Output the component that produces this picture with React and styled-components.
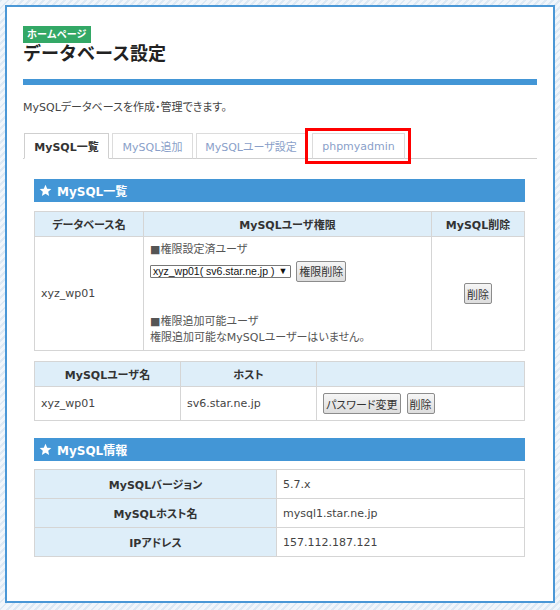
import React from 'react'
import styled, { createGlobalStyle } from 'styled-components'

const GlobalStyle = createGlobalStyle`
	html, body {
		margin: 0;
		padding: 0;
	}
	body {
		font-family: "DejaVu Sans", "Noto Sans CJK JP", sans-serif;
		color: #333;
		background: repeating-linear-gradient(135deg, #dde9f4 0 2px, #f1f6fb 2px 5px);
	}
`

const Page = styled.div`
	padding: 5px;
	width: 560px;
	height: 610px;
	box-sizing: border-box;
`

const Panel = styled.div`
	width: 550px;
	height: 598px;
	box-sizing: border-box;
	background: #fff;
	border: 2px solid #4a97d6;
	padding: 16px 16px 0 16px;
`

const Badge = styled.span`
	display: inline-block;
	background: #33a866;
	color: #fff;
	font-size: 10px;
	font-weight: bold;
	line-height: 17px;
	padding: 0 4px;
`

const Title = styled.h1`
	margin: 0;
	font-size: 18px;
	line-height: 22px;
	font-weight: bold;
	color: #222;
`

const Rule = styled.div`
	height: 6px;
	background: #4396d6;
	margin-top: 14px;
`

const Lead = styled.p`
	margin: 15px 0 0;
	font-size: 11px;
	line-height: 16px;
	color: #444;
	font-feature-settings: "palt";
`

const Tabs = styled.div`
	display: flex;
	gap: 3px;
	margin-top: 17px;
	padding-left: 1px;
	border-bottom: 1px solid #cfcfcf;
	height: 25px;
	font-feature-settings: "palt";
`

const Tab = styled.div`
	position: relative;
	box-sizing: border-box;
	width: ${p => p.$w}px;
	height: 26px;
	border: 1px solid ${p => (p.$active ? '#cfcfcf' : '#dcdcdc')};
	border-bottom: ${p => (p.$active ? '1px solid #fff' : '1px solid #cfcfcf')};
	background: #fff;
	display: flex;
	align-items: center;
	justify-content: center;
	font-size: 11px;
	font-weight: ${p => (p.$active ? 'bold' : 'normal')};
	color: ${p => (p.$active ? '#333' : '#8a9fc9')};
	margin-left: ${p => p.$ml || 0}px;
`

const Highlight = styled.div`
	position: absolute;
	top: -6px;
	left: -8px;
	right: -7px;
	bottom: -6px;
	border: 3px solid #f00;
	pointer-events: none;
`

const Body = styled.div`
	padding: 0 12px 0 11px;
	font-feature-settings: "palt";
`

const SectionHead = styled.div`
	margin-top: ${p => p.$mt}px;
	height: 23px;
	background: #4396d6;
	color: #fff;
	font-size: 12px;
	font-weight: bold;
	display: flex;
	align-items: center;
	gap: 5px;
	padding-left: 5px;
`

const Table = styled.table`
	width: 100%;
	border-collapse: collapse;
	margin-top: ${p => p.$mt}px;
	font-size: 11px;
	table-layout: fixed;
`

const Th = styled.th`
	background: #deeef9;
	border: 1px solid #d5d5d5;
	font-weight: bold;
	color: #333;
	height: ${p => p.$h || 24}px;
	padding: 0;
	text-align: center;
	width: ${p => (p.$w ? p.$w + 'px' : 'auto')};
`

const Td = styled.td`
	border: 1px solid #d5d5d5;
	color: #444;
	height: ${p => p.$h || 24}px;
	padding: 0 6px;
	text-align: ${p => (p.$center ? 'center' : 'left')};
	vertical-align: middle;
`

const Label = styled.div`
	color: #555;
	line-height: 16px;
	margin-top: ${p => p.$mt || 0}px;
`

const Row = styled.div`
	display: flex;
	align-items: center;
	gap: 5px;
	margin-top: 3px;
`

const Select = styled.div`
	box-sizing: border-box;
	height: 13px;
	border: 1px solid #777;
	border-radius: 1px;
	padding: 0 3px 0 2px;
	font-family: "Liberation Sans", Arial, sans-serif;
	font-size: 10.5px;
	line-height: 11px;
	color: #111;
	display: flex;
	align-items: center;
	gap: 4px;
	white-space: nowrap;
`

const Arrow = styled.span`
	font-size: 9px;
`

const Button = styled.button`
	box-sizing: border-box;
	height: 21px;
	padding: 0 2px;
	border: 1px solid #8c8c8c;
	border-radius: 2px;
	background: linear-gradient(#f6f6f6, #dddddd);
	font-family: "Noto Sans CJK JP", sans-serif;
	font-size: 11px;
	color: #333;
	font-feature-settings: "palt";
	margin-left: ${p => p.$ml || 0}px;
`

const Star = () => (
	<svg width="13" height="13" viewBox="0 0 24 24">
		<path
			fill="#fff"
			d="M12 1.5l3.1 7.1 7.7.7-5.8 5.1 1.7 7.6L12 18l-6.7 4 1.7-7.6-5.8-5.1 7.7-.7z"
		/>
	</svg>
)

const App = () => {
	return (
		<Page>
			<GlobalStyle />
			<Panel>
				<Badge>ホームページ</Badge>
				<Title>データベース設定</Title>
				<Rule />
				<Lead>MySQLデータベースを作成・管理できます。</Lead>
				<Tabs>
					<Tab $active $w={85}>MySQL一覧</Tab>
					<Tab $w={81}>MySQL追加</Tab>
					<Tab $w={110}>MySQLユーザ設定</Tab>
					<Tab $w={93} $ml={3}>
						phpmyadmin
						<Highlight />
					</Tab>
				</Tabs>
				<Body>
					<SectionHead $mt={20}>
						<Star />
						MySQL一覧
					</SectionHead>
					<Table $mt={9}>
						<thead>
							<tr>
								<Th $w={108}>データベース名</Th>
								<Th>MySQLユーザ権限</Th>
								<Th $w={92}>MySQL削除</Th>
							</tr>
						</thead>
						<tbody>
							<tr>
								<Td $h={113}>xyz_wp01</Td>
								<Td>
									<Label>■権限設定済ユーザ</Label>
									<Row>
										<Select>
											xyz_wp01( sv6.star.ne.jp )<Arrow>▼</Arrow>
										</Select>
										<Button>権限削除</Button>
									</Row>
									<Label $mt={32}>■権限追加可能ユーザ</Label>
									<Label>権限追加可能なMySQLユーザーはいません。</Label>
								</Td>
								<Td $center>
									<Button>削除</Button>
								</Td>
							</tr>
						</tbody>
					</Table>
					<Table $mt={10}>
						<thead>
							<tr>
								<Th $w={145}>MySQLユーザ名</Th>
								<Th $w={135}>ホスト</Th>
								<Th />
							</tr>
						</thead>
						<tbody>
							<tr>
								<Td $h={33}>xyz_wp01</Td>
								<Td>sv6.star.ne.jp</Td>
								<Td>
									<Button>パスワード変更</Button>
									<Button $ml={6}>削除</Button>
								</Td>
							</tr>
						</tbody>
					</Table>
					<SectionHead $mt={17}>
						<Star />
						MySQL情報
					</SectionHead>
					<Table $mt={8}>
						<tbody>
							<tr>
								<Th $w={241} $h={28}>MySQLバージョン</Th>
								<Td $h={28}>5.7.x</Td>
							</tr>
							<tr>
								<Th $h={28}>MySQLホスト名</Th>
								<Td $h={28}>mysql1.star.ne.jp</Td>
							</tr>
							<tr>
								<Th $h={28}>IPアドレス</Th>
								<Td $h={28}>157.112.187.121</Td>
							</tr>
						</tbody>
					</Table>
				</Body>
			</Panel>
		</Page>
	)
}

export default App
